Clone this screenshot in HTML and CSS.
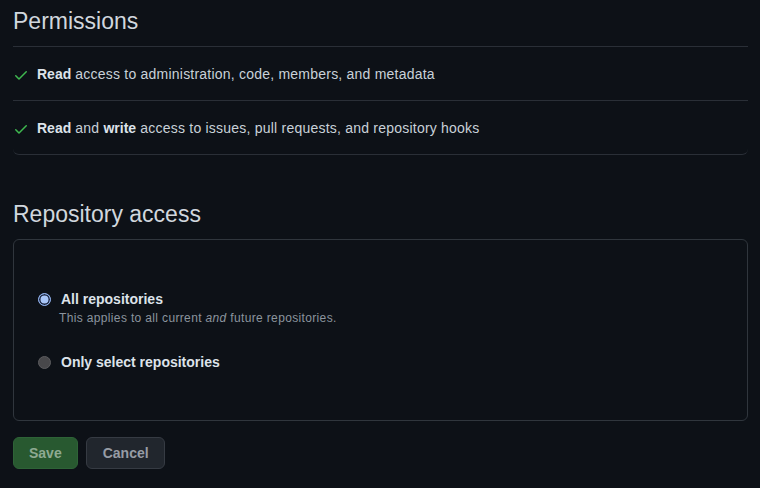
FILE: index.html
```html
<!DOCTYPE html>
<html lang="en">
<head>
    <meta charset="UTF-8">
    <meta name="viewport" content="width=device-width, initial-scale=1.0">
    <title>Permissions</title>
    <link rel="stylesheet" href="styles.css">
</head>
<body>
    <div class="page">
        <h2 class="section-title">Permissions</h2>
        <ul class="perm-list">
            <li class="perm-row">
                <svg class="check" viewBox="0 0 16 16" width="16" height="16"><path d="M13.78 4.22a.75.75 0 0 1 0 1.06l-7.25 7.25a.75.75 0 0 1-1.06 0L2.22 9.28a.75.75 0 0 1 1.06-1.06L6 10.94l6.72-6.72a.75.75 0 0 1 1.06 0Z"></path></svg>
                <span><strong>Read</strong> access to administration, code, members, and metadata</span>
            </li>
            <li class="perm-row">
                <svg class="check" viewBox="0 0 16 16" width="16" height="16"><path d="M13.78 4.22a.75.75 0 0 1 0 1.06l-7.25 7.25a.75.75 0 0 1-1.06 0L2.22 9.28a.75.75 0 0 1 1.06-1.06L6 10.94l6.72-6.72a.75.75 0 0 1 1.06 0Z"></path></svg>
                <span><strong>Read</strong> and <strong>write</strong> access to issues, pull requests, and repository hooks</span>
            </li>
        </ul>

        <h2 class="section-title second">Repository access</h2>
        <form class="access-box">
            <label class="radio-row">
                <input type="radio" name="access" checked>
                <span class="radio-label">All repositories</span>
            </label>
            <p class="note">This applies to all current <em>and</em> future repositories.</p>
            <label class="radio-row last">
                <input type="radio" name="access">
                <span class="radio-label">Only select repositories</span>
            </label>
        </form>

        <div class="actions">
            <button type="button" class="btn btn-save">Save</button>
            <button type="button" class="btn btn-cancel">Cancel</button>
        </div>
    </div>
</body>
</html>
```

FILE: styles.css
```css
body {
    margin: 0;
    background-color: #0d1117;
    color: #c9d1d9;
    font-family: "Liberation Sans", Arial, sans-serif;
    font-size: 14px;
}

.page {
    padding: 0 12px 0 13px;
}

.section-title {
    margin: 0 0 10px;
    padding-top: 6px;
    font-size: 23px;
    line-height: 30px;
    font-weight: 400;
    color: #d1d7de;
}

.section-title.second {
    margin-top: 38px;
}

.perm-list {
    list-style: none;
    margin: 0;
    padding: 0;
    border-top: 1px solid #2a2f37;
    border-bottom: 1px solid #2a2f37;
    border-radius: 0 0 6px 6px;
}

.perm-row {
    display: flex;
    align-items: center;
    gap: 8px;
    padding: 17px 0 15px 0;
    line-height: 21px;
    letter-spacing: 0.22px;
}

.perm-row + .perm-row {
    border-top: 1px solid #2a2f37;
}

.check {
    fill: #3fb950;
    width: 16px;
    height: 16px;
}

.perm-row strong {
    color: #dde3ea;
    letter-spacing: 0;
}

.access-box {
    border: 1px solid #30363d;
    border-radius: 6px;
    padding: 49px 24px 48px;
    margin: 0;
}

.radio-row {
    display: flex;
    align-items: center;
    gap: 10px;
    line-height: 20px;
}

.radio-row input {
    appearance: none;
    -webkit-appearance: none;
    margin: 0;
    width: 13px;
    height: 13px;
    border-radius: 50%;
    border: 1px solid #5c5c5f;
    background-color: #48484b;
}

.radio-row input:checked {
    border: 1.5px solid #8fb1ef;
    background-color: #a9c6f8;
    box-shadow: inset 0 0 0 1.5px #1b2640;
}

.radio-label {
    font-weight: 700;
    color: #dde3ea;
}

.note {
    margin: 0 0 25px 21px;
    font-size: 12px;
    line-height: 18px;
    letter-spacing: 0.35px;
    color: #8b949e;
}

.actions {
    display: flex;
    gap: 8px;
    margin-top: 16px;
}

.btn {
    font-family: inherit;
    font-size: 14px;
    font-weight: 600;
    height: 32px;
    padding: 0 15px;
    border-radius: 6px;
    cursor: pointer;
}

.btn-save {
    background-color: #285930;
    border: 1px solid #2e6337;
    color: #8eaa92;
}

.btn-cancel {
    background-color: #21262d;
    border: 1px solid #363b43;
    color: #979ca5;
    padding: 0 15px 0 16px;
}
```
